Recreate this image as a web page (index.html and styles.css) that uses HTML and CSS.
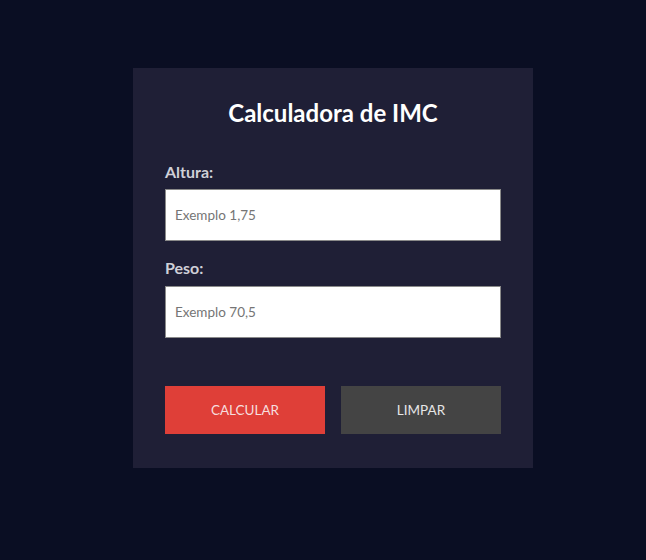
FILE: index.html
```html
<!DOCTYPE html>
<html lang="pt-BR">
<head>
<meta charset="utf-8">
<title>Calculadora de IMC</title>
<link rel="stylesheet" href="styles.css">
</head>
<body>
<div class="page">
  <main class="card">
    <h1 class="title">Calculadora de IMC</h1>
    <form class="form">
      <label class="label" for="altura">Altura:</label>
      <input class="input" id="altura" type="text" placeholder="Exemplo 1,75">
      <label class="label label-second" for="peso">Peso:</label>
      <input class="input" id="peso" type="text" placeholder="Exemplo 70,5">
      <div class="actions">
        <button type="button" class="btn btn-primary">CALCULAR</button>
        <button type="reset" class="btn btn-secondary">LIMPAR</button>
      </div>
    </form>
  </main>
</div>
</body>
</html>
```
FILE: styles.css
```css
html, body {
  margin: 0;
  padding: 0;
  background: #0a0e23;
  font-family: Lato, "Liberation Sans", sans-serif;
}

.page {
  padding: 68px 0 0 133px;
}

.card {
  width: 400px;
  box-sizing: border-box;
  background: #1f1f36;
  padding: 30px 32px 34px;
}

.title {
  margin: 0 0 35px;
  text-align: center;
  color: #ffffff;
  font-size: 24px;
  font-weight: 700;
  line-height: 29px;
}

.form {
  display: flex;
  flex-direction: column;
}

.label {
  color: #d0d0d8;
  font-size: 16px;
  font-weight: 700;
  line-height: 19px;
  margin-bottom: 8px;
}

.label-second {
  margin-top: 17px;
  margin-bottom: 9px;
}

.input {
  box-sizing: border-box;
  width: 336px;
  height: 52px;
  margin: 0;
  padding: 0 9px;
  border: 1px solid #8a8a8a;
  border-radius: 0;
  background: #ffffff;
  font-family: Lato, "Liberation Sans", sans-serif;
  font-size: 13.5px;
  color: #333;
  outline: none;
}

.input::placeholder {
  color: #757575;
}

.actions {
  display: flex;
  gap: 16px;
  margin-top: 48px;
}

.btn {
  width: 160px;
  height: 48px;
  border: none;
  border-radius: 0;
  font-family: Lato, "Liberation Sans", sans-serif;
  font-size: 13.5px;
  font-weight: 400;
  cursor: pointer;
}

.btn-primary {
  background: #df3f38;
  color: #f6dede;
}

.btn-secondary {
  background: #444444;
  color: #e6e6e6;
}
```
